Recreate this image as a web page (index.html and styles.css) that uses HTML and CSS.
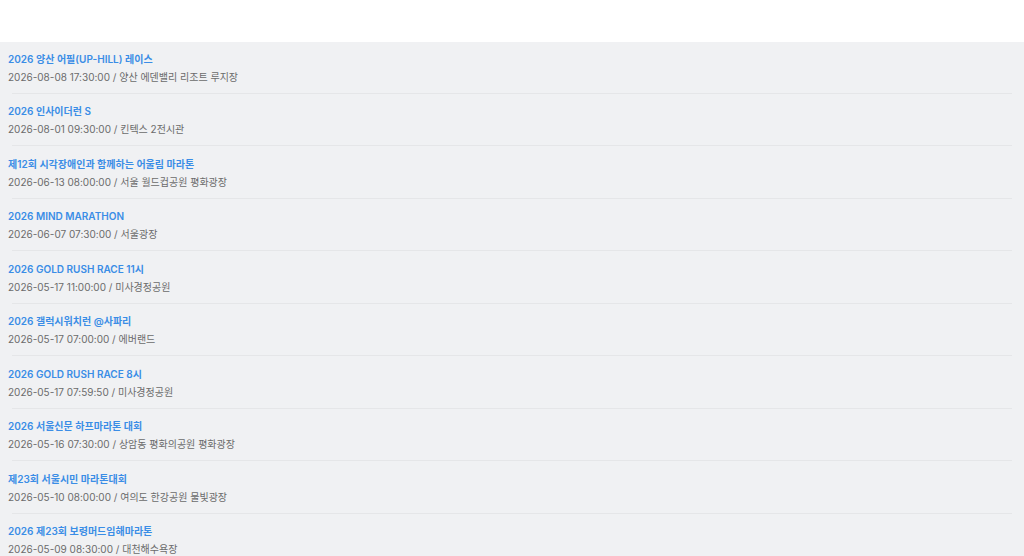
FILE: index.html
```html
<!DOCTYPE html>
<html lang="ko">
<head>
  <meta charset="UTF-8">
  <title>대회 목록</title>
  <link rel="stylesheet" href="styles.css">
</head>
<body>
  <div class="header"></div>

  <ul class="race-list">
    <li class="race-item">
      <div class="race-title">2026 양산 어필(UP-HILL) 레이스</div>
      <div class="race-info">2026-08-08 17:30:00 / 양산 에덴밸리 리조트 루지장</div>
    </li>
    <li class="race-item">
      <div class="race-title">2026 인사이더런 S</div>
      <div class="race-info">2026-08-01 09:30:00 / 킨텍스 2전시관</div>
    </li>
    <li class="race-item">
      <div class="race-title">제12회 시각장애인과 함께하는 어울림 마라톤</div>
      <div class="race-info">2026-06-13 08:00:00 / 서울 월드컵공원 평화광장</div>
    </li>
    <li class="race-item">
      <div class="race-title">2026 MIND MARATHON</div>
      <div class="race-info">2026-06-07 07:30:00 / 서울광장</div>
    </li>
    <li class="race-item">
      <div class="race-title">2026 GOLD RUSH RACE 11시</div>
      <div class="race-info">2026-05-17 11:00:00 / 미사경정공원</div>
    </li>
    <li class="race-item">
      <div class="race-title">2026 갤럭시워치런 @사파리</div>
      <div class="race-info">2026-05-17 07:00:00 / 에버랜드</div>
    </li>
    <li class="race-item">
      <div class="race-title">2026 GOLD RUSH RACE 8시</div>
      <div class="race-info">2026-05-17 07:59:50 / 미사경정공원</div>
    </li>
    <li class="race-item">
      <div class="race-title">2026 서울신문 하프마라톤 대회</div>
      <div class="race-info">2026-05-16 07:30:00 / 상암동 평화의공원 평화광장</div>
    </li>
    <li class="race-item">
      <div class="race-title">제23회 서울시민 마라톤대회</div>
      <div class="race-info">2026-05-10 08:00:00 / 여의도 한강공원 물빛광장</div>
    </li>
    <li class="race-item">
      <div class="race-title">2026 제23회 보령머드임해마라톤</div>
      <div class="race-info">2026-05-09 08:30:00 / 대천해수욕장</div>
    </li>
  </ul>
</body>
</html>
```

FILE: styles.css
```css
body {
  margin: 0;
  font-family: Inter, "Noto Sans CJK KR", sans-serif;
  background-color: #f0f1f3;
  color: #333;
}
.header {
  height: 42px;
  background: #fff;
}
.race-list {
  list-style: none;
  margin: 0;
  padding: 0;
}
.race-item {
  padding: 7.5px 8px 8px;
  background: linear-gradient(#e5e6e8, #e5e6e8) no-repeat 12px 100% / calc(100% - 24px) 1px;
  border-bottom: 1px solid transparent;
}
.race-title {
  font-size: 10px;
  font-weight: 600;
  line-height: 18px;
  color: #3a8de6;
}
.race-info {
  font-size: 10px;
  line-height: 18px;
  color: #6b6b6b;
}
```
